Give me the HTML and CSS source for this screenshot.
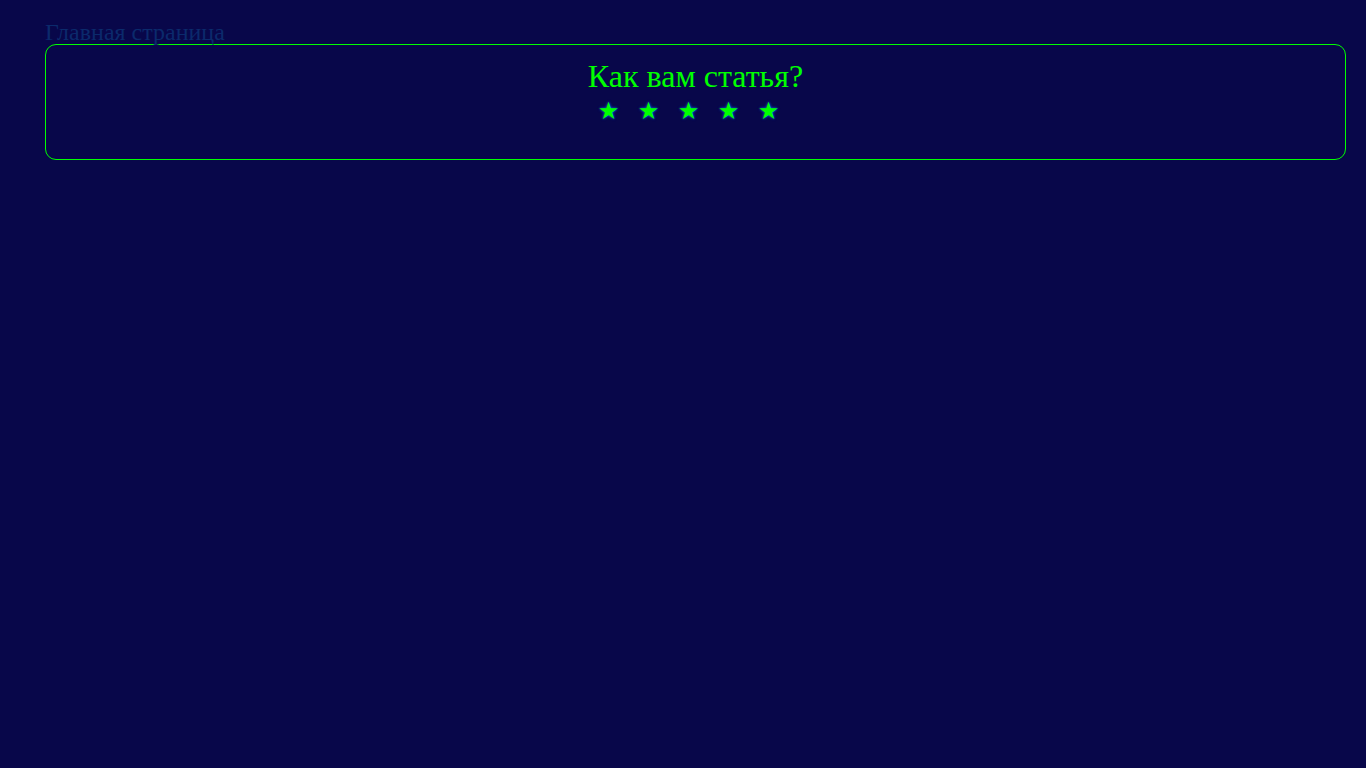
FILE: index.html
```html
<!DOCTYPE html>
<html lang="ru">
<head>
<meta charset="utf-8">
<title>Как вам статья?</title>
<link rel="stylesheet" href="styles.css">
</head>
<body>
<a class="home-link" href="#">Главная страница</a>
<section class="rating">
  <h2 class="rating-title">Как вам статья?</h2>
  <div class="stars">
    <span class="star">★</span><span class="star">★</span><span class="star">★</span><span class="star">★</span><span class="star">★</span>
  </div>
</section>
</body>
</html>
```
FILE: styles.css
```css
html, body {
  background: #08074a;
}
body {
  margin: 0;
  padding: 20px 20px 0 45px;
  font-family: "Liberation Serif", "Times New Roman", serif;
  min-height: 768px;
  box-sizing: border-box;
}
.home-link {
  display: block;
  width: max-content;
  font-size: 24px;
  line-height: 24px;
  color: #0b2a6c;
  text-decoration: none;
}
.rating {
  border: 1px solid #00ff00;
  border-radius: 11px;
  padding: 13px 0 0;
  height: 116px;
  box-sizing: border-box;
  text-align: center;
}
.rating-title {
  margin: 0;
  font-size: 32px;
  font-weight: normal;
  line-height: normal;
  color: #00ff00;
}
.stars {
  display: flex;
  justify-content: center;
  padding-right: 14px;
  margin-top: 3px;
}
.star {
  width: 40px;
  font-family: "DejaVu Sans", sans-serif;
  font-size: 24px;
  line-height: 26px;
  color: #00ff00;
  text-shadow: 0 0 3px #1050d8, 0 0 2px #0b3cb0;
}
```
